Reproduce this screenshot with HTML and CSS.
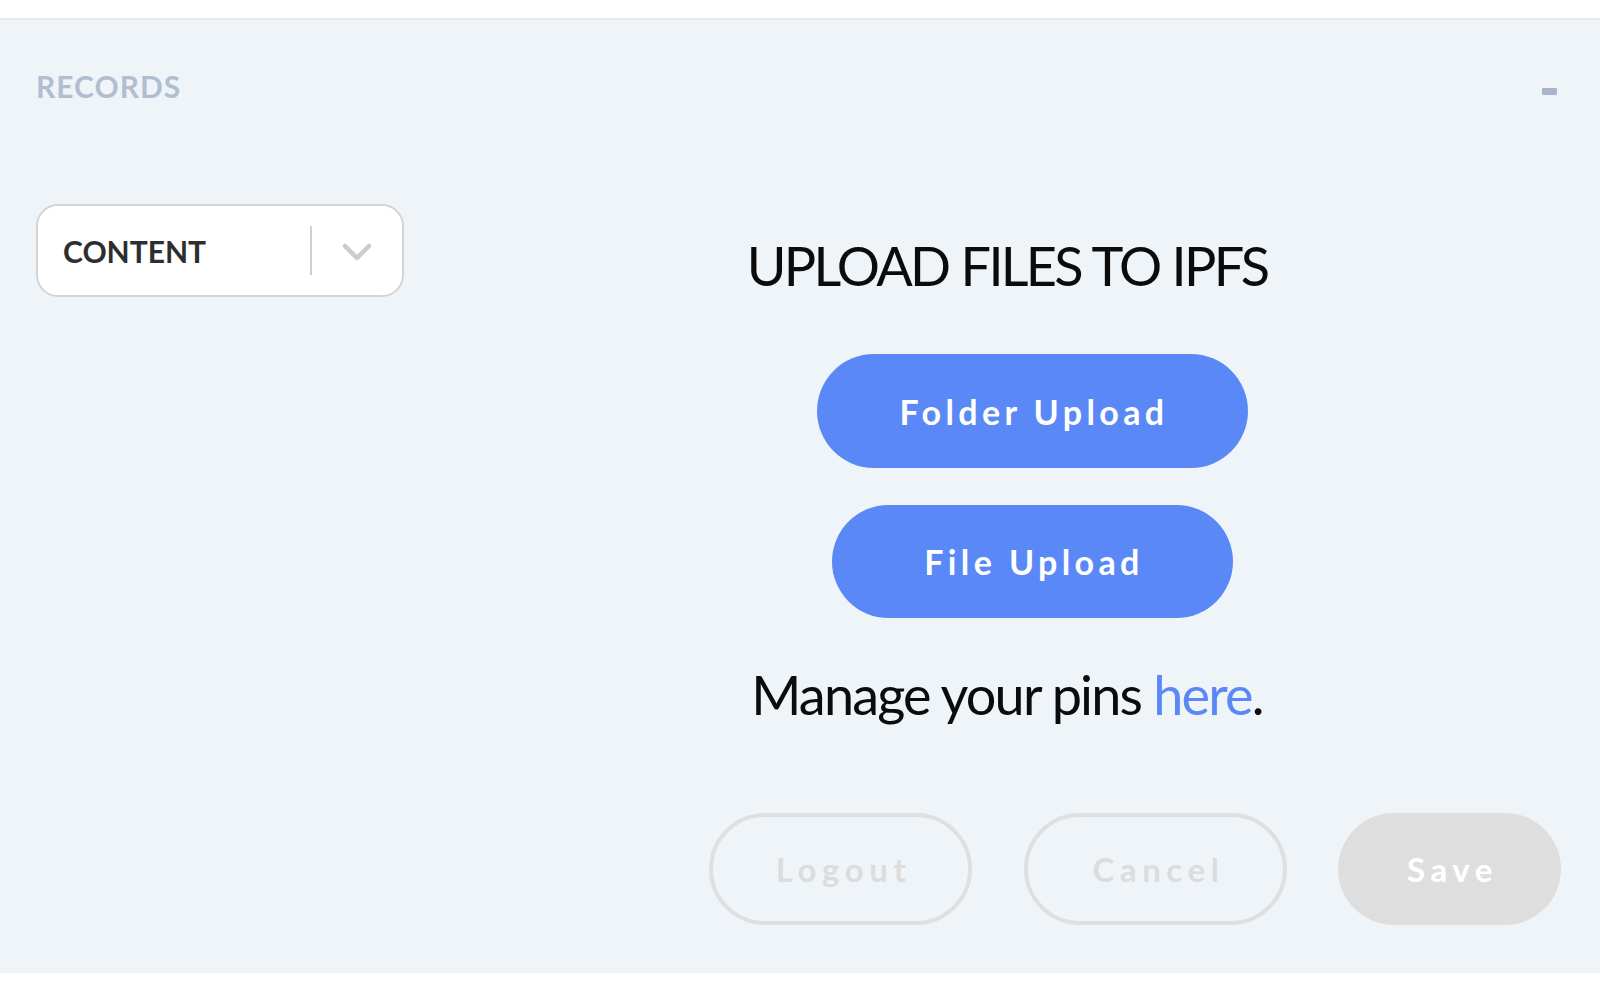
FILE: index.html
```html
<!DOCTYPE html>
<html lang="en">
<head>
<meta charset="utf-8">
<title>Records</title>
<link rel="stylesheet" href="styles.css">
</head>
<body>
<div class="top-bar"></div>
<section class="panel">
  <header class="panel-head">
    <h2 class="panel-title">RECORDS</h2>
    <span class="collapse" aria-label="collapse"></span>
  </header>
  <div class="panel-body">
    <aside class="side">
      <div class="select">
        <span class="select-label">CONTENT</span>
        <span class="select-sep"></span>
        <svg class="select-chev" width="30" height="18" viewBox="0 0 30 18"><polyline points="3,3 15,15 27,3" fill="none" stroke="#cccccc" stroke-width="4.5" stroke-linecap="round" stroke-linejoin="round"/></svg>
      </div>
    </aside>
    <main class="main">
      <h1 class="upload-title">UPLOAD FILES TO IPFS</h1>
      <button class="pill pill-blue pill-folder">Folder Upload</button>
      <button class="pill pill-blue pill-file">File Upload</button>
      <p class="manage">Manage your pins <a class="manage-link" href="#">here</a>.</p>
    </main>
  </div>
  <footer class="actions">
    <button class="act act-outline act-wide">Logout</button>
    <button class="act act-outline act-wide">Cancel</button>
    <button class="act act-fill act-save">Save</button>
  </footer>
</section>
</body>
</html>
```
FILE: styles.css
```css
* { box-sizing: border-box; }
html, body { margin: 0; padding: 0; background: #ffffff; }
body { font-family: "Lato", "Open Sans", sans-serif; color: #0b0b0b; width: 1600px; height: 1000px; overflow: hidden; }

.top-bar { height: 20px; border-bottom: 2px solid #e8e9ea; background: #ffffff; }

.panel { background: #eff4f9; height: 953px; padding: 51px 39px 0 36px; display: flex; flex-direction: column; }

.panel-head { display: flex; justify-content: space-between; align-items: flex-start; height: 30px; }
.panel-title { margin: 0; font-size: 30px; line-height: 30px; font-weight: 700; letter-spacing: 1px; color: #b2bed0; }
.collapse { width: 15px; height: 7px; background: #a9b5c9; border-radius: 1px; margin-top: 17px; margin-right: 4px; }

.panel-body { display: flex; gap: 49px; margin-top: 103px; }
.side { width: 368px; flex: none; }
.select { height: 93px; background: #ffffff; border: 2px solid #d4d4d4; border-radius: 22px; display: flex; align-items: center; padding: 0 30px 0 25px; }
.select-label { font-size: 30px; font-weight: 700; letter-spacing: 0; color: #2e2e2e; flex: 1; line-height: 30px; padding-top: 1px; }
.select-sep { width: 2px; height: 49px; background: #cfcfcf; margin-right: 30px; }
.select-chev { display: block; margin-top: 3px; }

.main { flex: 1; display: flex; flex-direction: column; align-items: center; padding-top: 35px; }
.upload-title { margin: 0; font-size: 54px; line-height: 54px; font-weight: 400; letter-spacing: -2.7px; word-spacing: 1px; color: #0b0b0b; }

.pill { border: none; border-radius: 60px; font-family: inherit; font-weight: 700; color: #ffffff; height: 114px; font-size: 34px; letter-spacing: 4.4px; padding: 0 0 0 4px; cursor: pointer; margin-left: 50px; }
.pill-blue { background: #5b88f7; }
.pill-folder { width: 431px; margin-top: 61px; }
.pill-file { width: 401px; height: 113px; margin-top: 37px; }

.manage { margin: 50px 0 0; font-size: 54px; line-height: 54px; letter-spacing: -1.8px; color: #0b0b0b; }
.manage-link { color: #5b88f7; text-decoration: none; }

.actions { display: flex; justify-content: flex-end; gap: 52px; margin-top: 91px; }
.act { height: 112px; border-radius: 60px; font-family: inherit; font-weight: 700; font-size: 33px; letter-spacing: 5.6px; padding: 0 0 0 6px; cursor: pointer; }
.act-outline { background: transparent; border: 4px solid #dfdfdf; color: #dcdcdc; }
.act-wide { width: 263px; }
.act-fill { background: #dedede; border: none; color: #ffffff; }
.act-save { width: 223px; margin-left: -1px; }
```
